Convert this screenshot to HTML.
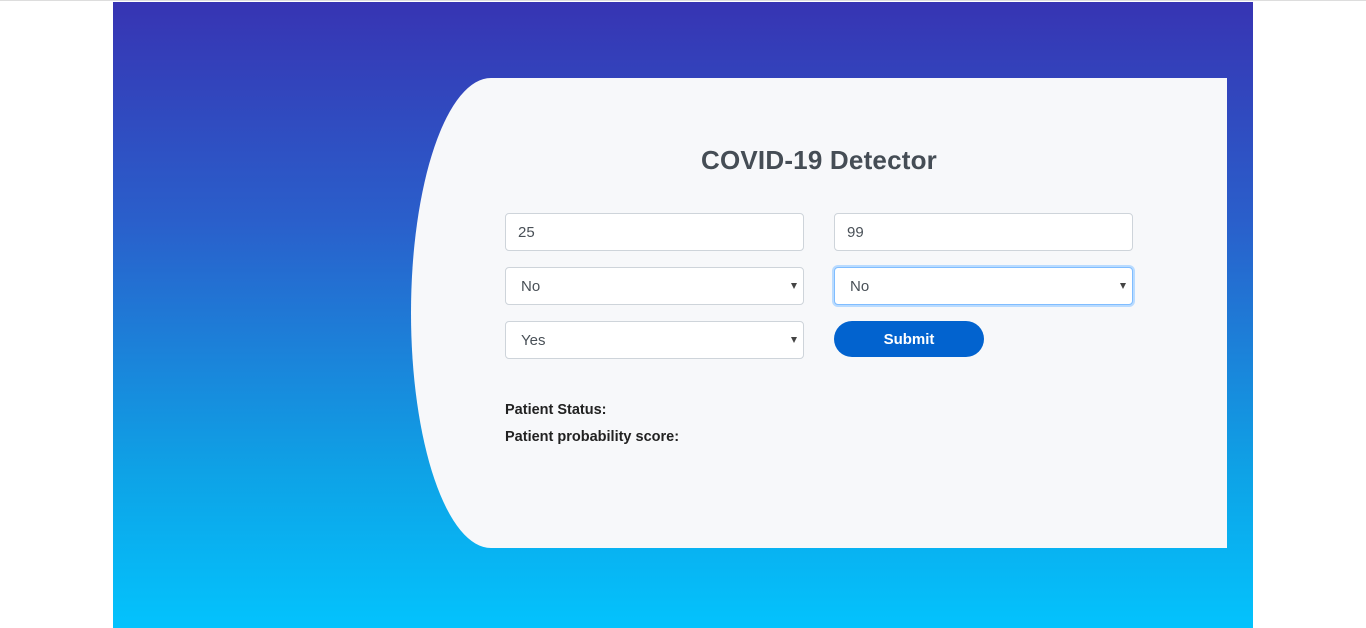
<!DOCTYPE html>
<html><head><meta charset="utf-8"><style>
*{box-sizing:border-box;margin:0;padding:0}
body{width:1366px;height:628px;background:#fff;position:relative;overflow:hidden;font-family:"Liberation Sans",sans-serif}
.topline{position:absolute;left:0;top:0;width:1366px;height:1px;background:#ddd}
.bg{position:absolute;left:113px;top:2px;width:1140px;height:626px;background:linear-gradient(to bottom,#3734b3 0%,#2a5fcb 35%,#0ea2e6 75%,#03c3fd 100%)}
.card{position:absolute;left:411px;top:78px;width:816px;height:470px;background:#f7f8fa;border-top-left-radius:80px 235px;border-bottom-left-radius:80px 235px}
h1{position:absolute;left:411px;width:816px;top:145px;text-align:center;font-size:26px;font-weight:bold;color:#454d55;letter-spacing:0.2px}
.f{position:absolute;width:299px;height:38px;background:#fff;border:1px solid #ced4da;border-radius:4px;font-size:15px;color:#495057;padding:10px 12px}
.s{padding-left:15px}
.s:after{content:"";position:absolute;right:6px;top:15px;border-left:3px solid transparent;border-right:3px solid transparent;border-top:6px solid #444}
.focus{border-color:#80bdff;box-shadow:0 0 0 2px #b9dbff}
.btn{position:absolute;left:834px;top:321px;width:150px;height:36px;border-radius:18px;background:#0263cf;color:#fff;font-weight:bold;font-size:15px;text-align:center;line-height:37px}
.l{position:absolute;left:505px;font-size:14.5px;font-weight:bold;color:#222}
</style></head><body>
<div class="topline"></div>
<div class="bg"></div>
<div class="card"></div>
<h1>COVID-19 Detector</h1>
<div class="f" style="left:505px;top:213px">25</div>
<div class="f" style="left:834px;top:213px">99</div>
<div class="f s" style="left:505px;top:267px">No</div>
<div class="f s focus" style="left:834px;top:267px">No</div>
<div class="f s" style="left:505px;top:321px">Yes</div>
<div class="btn">Submit</div>
<div class="l" style="top:402px">Patient Status:</div>
<div class="l" style="top:429px">Patient probability score:</div>
</body></html>
